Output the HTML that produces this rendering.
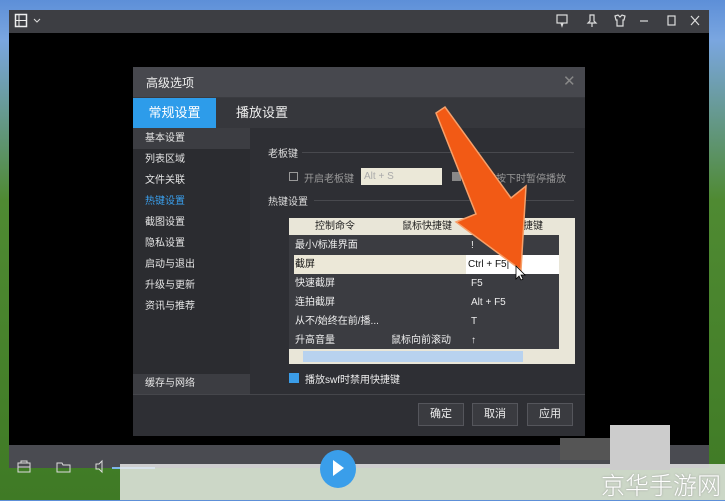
<!DOCTYPE html>
<html><head><meta charset="utf-8"><style>
*{margin:0;padding:0;box-sizing:border-box}
body{width:725px;height:500px;overflow:hidden;position:relative;font-family:"Liberation Sans","Noto Sans CJK SC",sans-serif;font-size:10px;color:#ddd;background:linear-gradient(#5d8fd8 0,#7aa6e0 40px,#4f8a32 200px,#3f7a25 500px)}
.a{position:absolute}
.side div{height:21px;line-height:21px;padding-left:12px;color:#e6e6e6;font-size:10px}
.row{height:19px;line-height:19px;color:#eee;position:relative}
.row span{position:absolute}
.btn{position:absolute;top:403px;width:46px;height:23px;border:1px solid #55565c;background:#3a3b40;color:#eee;text-align:center;line-height:21px;font-size:11px}
</style></head><body>
<div class="a" style="left:9px;top:10px;width:700px;height:458px;background:#000"></div>
<div class="a" style="left:9px;top:10px;width:700px;height:23px;background:#3d3e43"></div>
<svg class="a" style="left:14px;top:13px" width="30" height="17"><rect x="1.5" y="1.5" width="11" height="12" fill="none" stroke="#eee" stroke-width="1.5"/><line x1="5" y1="2" x2="5" y2="13" stroke="#eee"/><line x1="1" y1="7.5" x2="12" y2="7.5" stroke="#eee"/><path d="M20 6l3 3 3-3" stroke="#ddd" fill="none"/></svg>
<svg class="a" style="left:555px;top:13px" width="150" height="16" stroke="#ddd" fill="none" stroke-width="1.2"><rect x="2" y="2" width="10" height="8"/><path d="M6 10l1 3 1-3"/><path d="M35 2h4v6l2 2h-8l2-2zM37 10v4"/><path d="M60 3l3-1 2 2 2-2 3 1-1 4h-1v6h-6v-6h-1z"/><line x1="85" y1="8" x2="93" y2="8"/><rect x="113" y="3" width="7" height="9"/><path d="M136 3l8 9M144 3l-8 9"/></svg>
<div class="a" style="left:9px;top:445px;width:700px;height:23px;background:#4a4b51"></div>
<svg class="a" style="left:16px;top:459px" width="150" height="16" stroke="#ddd" fill="none"><rect x="2" y="4" width="12" height="9"/><path d="M5 4v-2h6v2M2 8h12"/><path d="M41 4h5l1 2h7v7h-13z"/><path d="M80 5h3l3-3v11l-3-3h-3z"/><line x1="96" y1="9" x2="139" y2="9" stroke="#7fb5e8" stroke-width="2"/></svg>
<div class="a" style="left:120px;top:464px;width:605px;height:36px;background:rgba(235,235,235,.82)"></div>
<div class="a" style="left:320px;top:450px;width:36px;height:38px;border-radius:50%;background:#3a9eea"></div>
<div class="a" style="left:333px;top:460px;width:0;height:0;border-left:11px solid #fff;border-top:8px solid transparent;border-bottom:8px solid transparent"></div>
<div class="a" style="left:560px;top:438px;width:50px;height:22px;background:#555"></div>
<div class="a" style="left:610px;top:425px;width:60px;height:45px;background:#ccc"></div>
<div class="a" style="right:4px;top:466px;font-size:24px;color:#fff;font-family:'Noto Sans CJK SC',sans-serif;font-weight:300;text-shadow:0 0 2px #999">京华手游网</div>

<div class="a" style="left:133px;top:67px;width:452px;height:369px;background:#2e2f34"></div>
<div class="a" style="left:133px;top:67px;width:452px;height:31px;background:#47484e;border-bottom:1px solid #3a3b40"></div>
<div class="a" style="left:146px;top:74px;font-size:12px;color:#eee">高级选项</div>
<div class="a" style="left:563px;top:72px;font-size:15px;color:#888">✕</div>
<div class="a" style="left:133px;top:98px;width:452px;height:30px;background:#36373c"></div>
<div class="a" style="left:133px;top:98px;width:83px;height:30px;background:#2d9cea;color:#fff;font-size:13px;text-align:center;line-height:30px">常规设置</div>
<div class="a" style="left:236px;top:98px;color:#eee;font-size:13px;line-height:30px">播放设置</div>
<div class="a side" style="left:133px;top:128px;width:117px;height:266px;background:#2b2c30">
<div style="background:#3c3d42">基本设置</div><div>列表区域</div><div>文件关联</div><div style="color:#3aa0ee">热键设置</div><div>截图设置</div><div>隐私设置</div><div>启动与退出</div><div>升级与更新</div><div>资讯与推荐</div></div>
<div class="a" style="left:133px;top:374px;width:117px;height:20px;background:#3c3d42;line-height:20px;padding-left:12px;color:#e6e6e6">缓存与网络</div>
<div class="a" style="left:133px;top:394px;width:452px;height:1px;background:#45464b"></div>
<div class="a" style="left:268px;top:145px">老板键</div><div class="a" style="left:302px;top:152px;width:272px;height:1px;background:#48494e"></div>
<div class="a" style="left:289px;top:172px;width:9px;height:9px;border:1px solid #999"></div>
<div class="a" style="left:304px;top:170px;color:#999">开启老板键</div>
<div class="a" style="left:361px;top:168px;width:81px;height:17px;background:#ebe8d8;color:#aaa;padding-left:3px;line-height:17px">Alt + S</div>
<div class="a" style="left:452px;top:172px;width:9px;height:9px;background:#888"></div>
<div class="a" style="left:486px;top:170px;color:#999">键按下时暂停播放</div>
<div class="a" style="left:268px;top:193px">热键设置</div><div class="a" style="left:314px;top:200px;width:260px;height:1px;background:#48494e"></div>
<div class="a" style="left:289px;top:218px;width:286px;height:146px;background:#3b3c41"></div>
<div class="a" style="left:289px;top:218px;width:270px;height:17px;background:#e9e6d8;color:#222;line-height:17px"><span class="a" style="left:26px">控制命令</span><span class="a" style="left:113px">鼠标快捷键</span><span class="a" style="left:224px">快捷键</span></div>
<div class="a" style="left:559px;top:218px;width:16px;height:131px;background:#e9e6d8"></div>
<div class="a" style="left:294px;top:236px;width:265px">
<div class="row"><span style="left:1px">最小/标准界面</span><span style="left:177px">!</span></div>
<div class="row" style="background:#ece8d8;color:#111"><span style="left:1px">截屏</span><span style="left:172px;width:93px;height:19px;background:#fff;padding-left:2px">Ctrl + F5|</span></div>
<div class="row"><span style="left:1px">快速截屏</span><span style="left:177px">F5</span></div>
<div class="row"><span style="left:1px">连拍截屏</span><span style="left:177px">Alt + F5</span></div>
<div class="row"><span style="left:1px">从不/始终在前/播...</span><span style="left:177px">T</span></div>
<div class="row"><span style="left:1px">升高音量</span><span style="left:97px">鼠标向前滚动</span><span style="left:177px">↑</span></div></div>
<div class="a" style="left:289px;top:349px;width:286px;height:15px;background:#e9e6d8"></div>
<div class="a" style="left:303px;top:351px;width:220px;height:11px;background:#b8d2ef"></div>
<div class="a" style="left:289px;top:373px;width:10px;height:10px;background:#3b9de8"></div>
<div class="a" style="left:305px;top:371px;color:#eee">播放swf时禁用快捷键</div>
<div class="btn" style="left:418px">确定</div><div class="btn" style="left:472px">取消</div><div class="btn" style="left:527px">应用</div>
<svg class="a" style="left:0;top:0" width="725" height="500"><polygon points="436,113 445,107 511,198 526,186 521,270 456,222 476,214" fill="#f25a15" stroke="#f6a06a" stroke-width="1.5"/><path d="M516 266v13l3-3 2 4 2-1-2-4h4z" fill="#fff" stroke="#000" stroke-width=".8"/></svg>
</body></html>
